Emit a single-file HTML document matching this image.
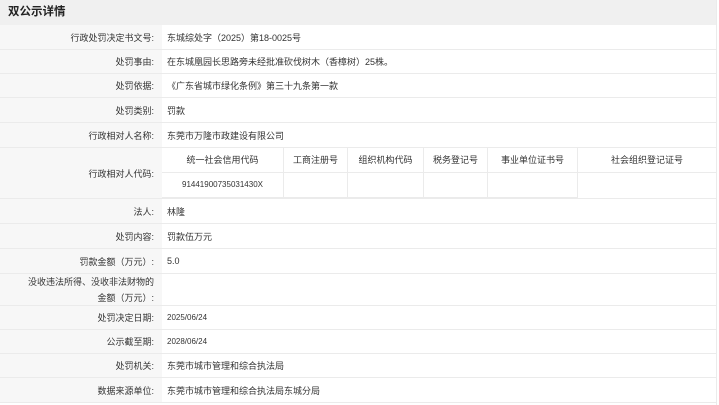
<!DOCTYPE html><html><head><meta charset="utf-8"><style>
body{margin:0;width:719px;height:405px;background:#fff;font-family:"Liberation Sans","Noto Sans CJK SC",sans-serif;font-size:9px;color:#333;position:relative;overflow:hidden}
.h{position:absolute;left:0;top:0;width:716px;height:25px;background:#f0f0f0;font-size:11.5px;font-weight:bold;line-height:25px;padding-left:8px;box-sizing:border-box;color:#222}
.r{position:absolute;left:0;width:716px;border-bottom:1px solid #ebebeb;box-sizing:border-box}
.l{position:absolute;left:0;top:0;bottom:0;width:162px;background:#f7f7f7;text-align:right;padding-right:8px;box-sizing:border-box;display:flex;align-items:center;justify-content:flex-end}
.v{position:absolute;left:167px;top:0;bottom:0;display:flex;align-items:center}
.sub{position:absolute;left:162px;height:25px;border-right:1px solid #ebebeb;border-bottom:1px solid #ebebeb;box-sizing:border-box;text-align:center;line-height:24px}
.edge{position:absolute;left:716px;top:0;width:1px;height:405px;background:#ebebeb}
</style></head><body>
<div class="h">双公示详情</div>
<div class="r" style="top:25px;height:25px"><div class="l">行政处罚决定书文号:</div><div class="v">东城综处字（2025）第18-0025号</div></div>
<div class="r" style="top:50px;height:24px"><div class="l">处罚事由:</div><div class="v">在东城凰园长思路旁未经批准砍伐树木（香樟树）25株。</div></div>
<div class="r" style="top:74px;height:24px"><div class="l">处罚依据:</div><div class="v">《广东省城市绿化条例》第三十九条第一款</div></div>
<div class="r" style="top:98px;height:25px"><div class="l">处罚类别:</div><div class="v">罚款</div></div>
<div class="r" style="top:123px;height:25px"><div class="l">行政相对人名称:</div><div class="v">东莞市万隆市政建设有限公司</div></div>
<div class="r" style="top:148px;height:51px"><div class="l">行政相对人代码:</div></div>
<div class="sub" style="top:148px;left:162px;width:122px">统一社会信用代码</div>
<div class="sub" style="top:148px;left:284px;width:64px">工商注册号</div>
<div class="sub" style="top:148px;left:348px;width:76px">组织机构代码</div>
<div class="sub" style="top:148px;left:424px;width:64px">税务登记号</div>
<div class="sub" style="top:148px;left:488px;width:90px">事业单位证书号</div>
<div class="sub" style="top:148px;left:578px;width:138px;border-right:none">社会组织登记证号</div>
<div class="sub" style="top:173px;left:162px;width:122px;font-size:8px">91441900735031430X</div>
<div class="sub" style="top:173px;left:284px;width:64px"></div>
<div class="sub" style="top:173px;left:348px;width:76px"></div>
<div class="sub" style="top:173px;left:424px;width:64px"></div>
<div class="sub" style="top:173px;left:488px;width:90px"></div>
<div class="r" style="top:199px;height:25px"><div class="l">法人:</div><div class="v">林隆</div></div>
<div class="r" style="top:224px;height:25px"><div class="l">处罚内容:</div><div class="v">罚款伍万元</div></div>
<div class="r" style="top:249px;height:25px"><div class="l">罚款金额（万元）:</div><div class="v">5.0</div></div>
<div class="r" style="top:274px;height:32px"><div class="l" style="line-height:16px">没收违法所得、没收非法财物的<br>金额（万元）:</div></div>
<div class="r" style="top:306px;height:24px"><div class="l">处罚决定日期:</div><div class="v" style="font-size:8px">2025/06/24</div></div>
<div class="r" style="top:330px;height:24px"><div class="l">公示截至期:</div><div class="v" style="font-size:8px">2028/06/24</div></div>
<div class="r" style="top:354px;height:24px"><div class="l">处罚机关:</div><div class="v">东莞市城市管理和综合执法局</div></div>
<div class="r" style="top:378px;height:25px"><div class="l">数据来源单位:</div><div class="v">东莞市城市管理和综合执法局东城分局</div></div>
<div class="edge"></div>
</body></html>
